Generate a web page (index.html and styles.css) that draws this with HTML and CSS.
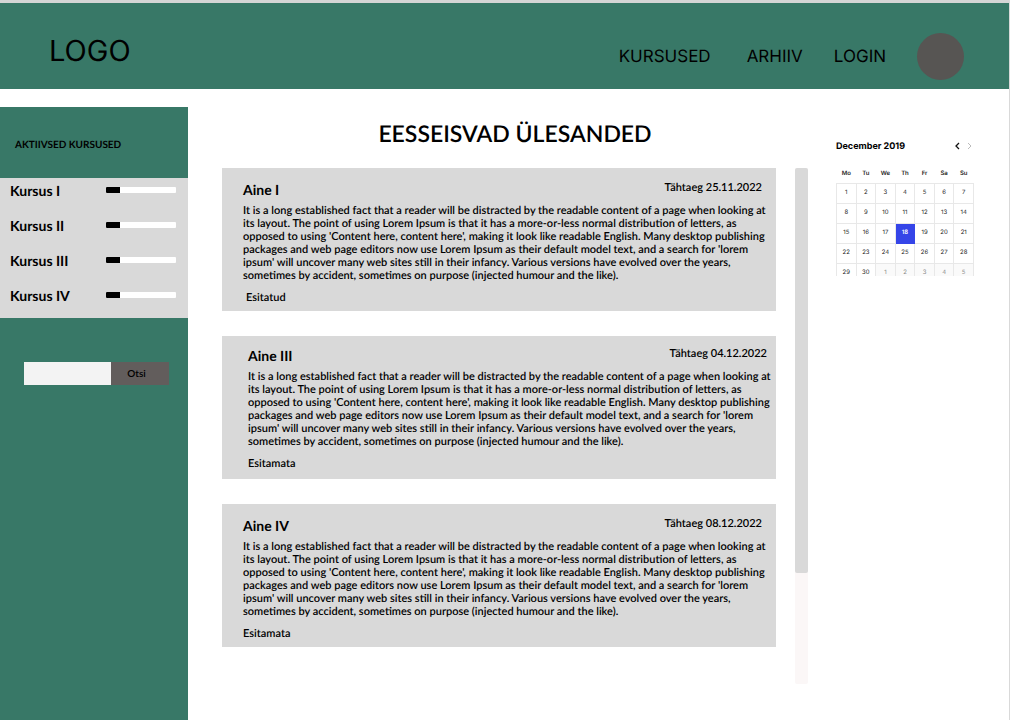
FILE: index.html
```
<!DOCTYPE html>
<html lang="et">
<head>
<meta charset="utf-8">
<title>Eesseisvad ülesanded</title>
<link rel="stylesheet" href="styles.css">
</head>
<body>
<header class="header">
  <a class="logo" href="#">LOGO</a>
  <nav class="nav">
    <a class="nav-link nav-courses" href="#">KURSUSED</a>
    <a class="nav-link nav-archive" href="#">ARHIIV</a>
    <a class="nav-link nav-login" href="#">LOGIN</a>
    <span class="avatar"></span>
  </nav>
</header>
<div class="layout">
  <aside class="sidebar">
    <h2 class="sidebar-title">AKTIIVSED KURSUSED</h2>
    <ul class="courses">
      <li class="course"><label for="k1">Kursus I</label><progress class="bar" id="k1" max="100" value="20"></progress></li>
      <li class="course"><label for="k2">Kursus II</label><progress class="bar" id="k2" max="100" value="20"></progress></li>
      <li class="course"><label for="k3">Kursus III</label><progress class="bar" id="k3" max="100" value="20"></progress></li>
      <li class="course"><label for="k4">Kursus IV</label><progress class="bar" id="k4" max="100" value="20"></progress></li>
    </ul>
    <form class="search">
      <input class="search-input" type="text" aria-label="Otsi">
      <button class="search-button" type="button">Otsi</button>
    </form>
  </aside>
  <main class="main">
    <h1 class="title">EESSEISVAD ÜLESANDED</h1>
    <div class="tasks">
      <div class="list">
        <article class="card">
          <div class="card-head"><h2 class="card-title">Aine I</h2><span class="due">Tähtaeg 25.11.2022</span></div>
          <p class="text">It is a long established fact that a reader will be distracted by the readable content of a page when looking at<br>its layout. The point of using Lorem Ipsum is that it has a more-or-less normal distribution of letters, as<br>opposed to using 'Content here, content here', making it look like readable English. Many desktop publishing<br>packages and web page editors now use Lorem Ipsum as their default model text, and a search for 'lorem<br>ipsum' will uncover many web sites still in their infancy. Various versions have evolved over the years,<br>sometimes by accident, sometimes on purpose (injected humour and the like).</p>
          <p class="status status-done">Esitatud</p>
        </article>
        <article class="card card-inset">
          <div class="card-head"><h2 class="card-title">Aine III</h2><span class="due">Tähtaeg 04.12.2022</span></div>
          <p class="text">It is a long established fact that a reader will be distracted by the readable content of a page when looking at<br>its layout. The point of using Lorem Ipsum is that it has a more-or-less normal distribution of letters, as<br>opposed to using 'Content here, content here', making it look like readable English. Many desktop publishing<br>packages and web page editors now use Lorem Ipsum as their default model text, and a search for 'lorem<br>ipsum' will uncover many web sites still in their infancy. Various versions have evolved over the years,<br>sometimes by accident, sometimes on purpose (injected humour and the like).</p>
          <p class="status">Esitamata</p>
        </article>
        <article class="card">
          <div class="card-head"><h2 class="card-title">Aine IV</h2><span class="due">Tähtaeg 08.12.2022</span></div>
          <p class="text">It is a long established fact that a reader will be distracted by the readable content of a page when looking at<br>its layout. The point of using Lorem Ipsum is that it has a more-or-less normal distribution of letters, as<br>opposed to using 'Content here, content here', making it look like readable English. Many desktop publishing<br>packages and web page editors now use Lorem Ipsum as their default model text, and a search for 'lorem<br>ipsum' will uncover many web sites still in their infancy. Various versions have evolved over the years,<br>sometimes by accident, sometimes on purpose (injected humour and the like).</p>
          <p class="status">Esitamata</p>
        </article>
      </div>
      <div class="track"><div class="thumb"></div></div>
    </div>
  </main>
  <section class="calendar">
    <div class="cal-head">
      <h2 class="cal-title">December 2019</h2>
      <button class="arrow" type="button" aria-label="Previous month"><svg width="12" height="12" viewBox="0 0 12 12" fill="none" stroke="#111" stroke-width="1.3"><path d="M9 2 6 5l3 3"/></svg></button>
      <button class="arrow" type="button" aria-label="Next month"><svg width="12" height="12" viewBox="0 0 12 12" fill="none" stroke="#bbb" stroke-width="1"><path d="M6 2l3 3-3 3"/></svg></button>
    </div>
    <div class="cal-clip">
      <table class="cal">
        <thead><tr><th>Mo</th><th>Tu</th><th>We</th><th>Th</th><th>Fr</th><th>Sa</th><th>Su</th></tr></thead>
        <tbody>
          <tr><td>1</td><td>2</td><td>3</td><td>4</td><td>5</td><td>6</td><td>7</td></tr>
          <tr><td>8</td><td>9</td><td>10</td><td>11</td><td>12</td><td>13</td><td>14</td></tr>
          <tr><td>15</td><td>16</td><td>17</td><td class="today">18</td><td>19</td><td>20</td><td>21</td></tr>
          <tr><td>22</td><td>23</td><td>24</td><td>25</td><td>26</td><td>27</td><td>28</td></tr>
          <tr><td>29</td><td>30</td><td class="next">1</td><td class="next">2</td><td class="next">3</td><td class="next">4</td><td class="next">5</td></tr>
        </tbody>
      </table>
    </div>
  </section>
</div>
</body>
</html>
```
FILE: styles.css
```
* { box-sizing: border-box; }
h1, h2, p, ul { margin: 0; padding: 0; }
body {
  margin: 0;
  min-height: 100vh;
  display: flex;
  flex-direction: column;
  border-right: 1px solid #d9d9d9;
  background: #fff;
  color: #000;
  font-family: Lato, sans-serif;
  font-weight: 600;
  text-rendering: geometricPrecision;
}
.header {
  display: flex;
  justify-content: space-between;
  height: 89px;
  padding: 0 45px 0 49px;
  border-top: 3px solid #d5d5d5;
  background: #387867;
  font-family: Inter, sans-serif;
  font-weight: 400;
}
.logo { padding-top: 30px; font-size: 29px; line-height: 36px; color: #000; text-decoration: none; }
.nav { display: flex; align-items: center; padding-top: 20px; }
.nav-link { padding-top: 1px; font-size: 17px; line-height: 20px; color: #000; text-decoration: none; }
.nav-courses { margin-right: 36px; }
.nav-archive { margin-right: 31px; }
.nav-login { margin-right: 31px; }
.avatar { width: 47px; height: 47px; border-radius: 50%; background: #575553; }
.layout {
  flex: 1;
  display: grid;
  grid-template-columns: 188px minmax(0, 1fr) 138px;
  margin: 18px 35px 0 0;
}
.sidebar { background: #387867; }
.sidebar-title { padding: 31px 15px 26px; font-size: 10px; line-height: 14px; font-weight: 700; }
.courses { list-style: none; background: #d9d9d9; }
.course {
  display: flex;
  justify-content: space-between;
  align-items: flex-start;
  height: 35px;
  padding: 4px 12px 0 10px;
  font-size: 14px;
  line-height: 18px;
  font-weight: 700;
}
.bar {
  appearance: none;
  width: 70px;
  height: 6px;
  margin-top: 5px;
  border: 0;
  border-radius: 1px;
  overflow: hidden;
  background: #fff;
}
.bar::-webkit-progress-bar { background: #fff; }
.bar::-webkit-progress-value { background: #000; }
.search { display: flex; margin: 44px 19px 0 24px; height: 23px; }
.search-input { flex: 1; min-width: 0; padding: 0 6px; border: 0; background: #f3f3f3; }
.search-button {
  width: 58px;
  padding: 0 7px 2px 0;
  border: 0;
  background: #625d5c;
  color: #000;
  font: 600 10px/14px Lato, sans-serif;
}
.main { margin: 0 28px 0 34px; }
.title { padding: 10px 0 19px; text-align: center; font-size: 23px; line-height: 32px; font-weight: 600; }
.tasks { display: flex; gap: 19px; }
.list { flex: 1; min-width: 0; display: flex; flex-direction: column; gap: 25px; }
.card { padding: 13px 14px 6px 21px; background: #d9d9d9; }
.card-inset { padding: 11px 9px 8px 26px; }
.card-head { display: flex; justify-content: space-between; }
.card-title { font-size: 14px; line-height: 18px; font-weight: 700; }
.due { font-size: 11px; line-height: 14px; }
.text { margin-top: 5px; font-size: 11px; line-height: 13px; white-space: nowrap; }
.status { margin-top: 9px; font-size: 11px; line-height: 14px; }
.status-done { padding-left: 3px; }
.track { width: 13px; height: 516px; border-radius: 2px; background: #fbf7f7; }
.thumb { height: 405px; border-radius: 2px; background: #d9d9d9; }
.calendar { padding-top: 33px; font-family: Inter, sans-serif; }
.cal-head { display: flex; align-items: center; height: 14px; }
.cal-title { flex: 1; font-size: 9px; line-height: 14px; font-weight: 700; }
.arrow { display: block; width: 12px; height: 12px; padding: 0; border: 0; background: none; }
.arrow svg { display: block; }
.cal-clip { height: 108px; margin-top: 14px; overflow: hidden; }
.cal { width: 100%; table-layout: fixed; border-collapse: collapse; font-size: 6px; line-height: 8px; text-align: center; color: #222; }
.cal th { height: 15px; padding: 0 0 3px; font-weight: 600; }
.cal td { height: 20px; padding: 0; border: 1px solid #e8e8e8; font-weight: 400; }
.cal .today { background: #3545e8; border-color: #3545e8; color: #fff; font-weight: 600; }
.cal .next { background: #fafafa; color: #888; }
```
